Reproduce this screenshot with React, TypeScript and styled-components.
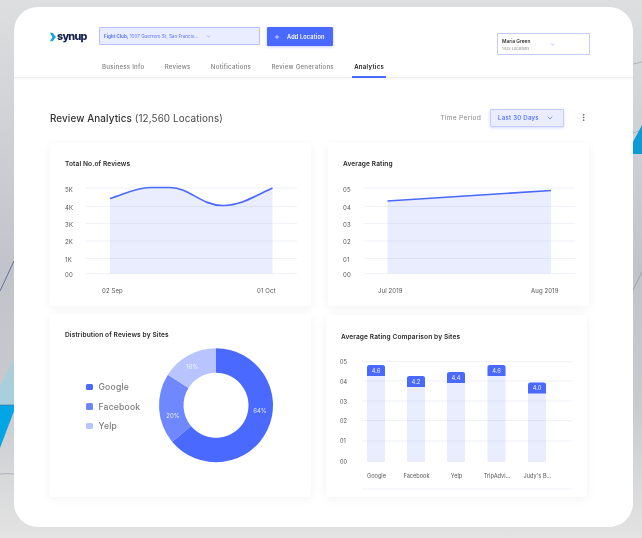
import React from "react";
import styled, { createGlobalStyle } from "styled-components";
import { ChevronDown, Plus, MoreVertical } from "lucide-react";

const Global = createGlobalStyle`
  html, body { margin: 0; padding: 0; background: #d8d9dc; }
  * { box-sizing: border-box; }
  body { font-family: Inter, "Liberation Sans", sans-serif; }
`;

const Page = styled.div`
  position: relative;
  width: 642px;
  height: 538px;
  overflow: hidden;
  padding: 7px 9px 11px 14px;
  background: linear-gradient(180deg, #dddedf 0%, #d2d3d7 20%, #c1c3ca 50%, #c8cace 75%, #e3e3e3 100%);
  filter: blur(0.35px);
`;
const Backdrop = styled.svg`
  position: absolute;
  inset: 0;
`;
const Window = styled.div`
  position: relative;
  height: 520px;
  background: #fff;
  border-radius: 24px;
  overflow: hidden;
`;
const Header = styled.header`
  height: 71px;
  border-bottom: 1px solid #eeeef0;
  box-shadow: 0 1px 2px rgba(0, 0, 0, 0.04);
`;
const TopBar = styled.div`
  display: flex;
  align-items: flex-start;
  padding: 20px 43px 0 36px;
  height: 49px;
`;
const Logo = styled.div`
  width: 49px;
  height: 19px;
  display: flex;
  align-items: center;
  color: #16224f;
  font-size: 10.8px;
  font-weight: 800;
  letter-spacing: -0.75px;
  svg { margin-right: 1px; }
`;
const LocationSelect = styled.div`
  width: 161px;
  height: 18px;
  display: flex;
  align-items: center;
  gap: 8px;
  padding-left: 4px;
  background: #e9edff;
  border: 1px solid #b6c2ff;
  border-radius: 1px;
  color: #5b77ff;
  font-size: 4.6px;
  svg { color: #4a69ff; }
`;
const AddButton = styled.button`
  width: 66px;
  height: 19px;
  margin-left: 7px;
  display: flex;
  align-items: center;
  gap: 7px;
  padding: 0 0 0 7px;
  background: #4a69ff;
  border: 0;
  border-radius: 1px;
  color: #fff;
  font: 600 5.6px Inter, sans-serif;
  letter-spacing: 0.15px;
  box-shadow: 0 1px 3px rgba(74, 105, 255, 0.35);
`;
const UserBox = styled.div`
  margin: 6px 0 0 auto;
  width: 93px;
  height: 22px;
  display: flex;
  align-items: center;
  gap: 19px;
  padding-left: 4px;
  background: #fff;
  border: 1px solid #c3cdff;
  border-radius: 1px;
  svg { color: #4a69ff; }
`;
const UserText = styled.div`
  display: flex;
  flex-direction: column;
  gap: 2px;
  width: 29px;
`;
const UserName = styled.span`
  font-size: 4.8px;
  font-weight: 600;
  color: #333;
  white-space: nowrap;
`;
const UserSub = styled.span`
  font-size: 3.8px;
  color: #888;
  white-space: nowrap;
`;
const Tabs = styled.nav`
  display: flex;
  height: 22px;
  padding-left: 86px;
  gap: 16.3px;
`;
const Tab = styled.div<{ $active?: boolean }>`
  height: 22px;
  padding: 6px 2px 0;
  font-size: 6.1px;
  line-height: 10px;
  font-weight: ${(p) => (p.$active ? 600 : 500)};
  letter-spacing: 0.25px;
  color: ${(p) => (p.$active ? "#222" : "#808080")};
  border-bottom: 2px solid ${(p) => (p.$active ? "#4a69ff" : "transparent")};
  white-space: nowrap;
`;
const Main = styled.main`
  padding: 0 44px 0 36px;
`;
const TitleRow = styled.div`
  display: flex;
  align-items: center;
  height: 17px;
  margin: 32px 0 16px;
`;
const Title = styled.h1`
  margin: 0;
  font-size: 9.9px;
  line-height: 17px;
  font-weight: 400;
  color: #4a4a4a;
  letter-spacing: 0.1px;
  b { font-weight: 500; color: #333; }
`;
const PeriodLabel = styled.span`
  margin: 0 0 1px auto;
  font-size: 6.7px;
  color: #888;
  letter-spacing: 0.25px;
`;
const PeriodSelect = styled.div`
  width: 74px;
  height: 18px;
  margin: 0 0 2px 9px;
  display: flex;
  align-items: center;
  justify-content: space-between;
  padding: 0 9px 0 7px;
  background: #e9edff;
  border: 1px solid #c3cdff;
  border-radius: 1px;
  box-shadow: 0 1px 3px rgba(74, 105, 255, 0.25);
  color: #4a69ff;
  font-size: 6.1px;
  font-weight: 500;
  letter-spacing: 0.25px;
`;
const Kebab = styled.div`
  width: 10px;
  margin: 0 0 2px 15px;
  display: flex;
  color: #555;
`;
const Row = styled.div<{ $gap: number; $mb?: number }>`
  display: flex;
  gap: ${(p) => p.$gap}px;
  margin-bottom: ${(p) => p.$mb ?? 0}px;
`;
const Card = styled.section<{ $h: number; $mt?: number }>`
  width: 261px;
  height: ${(p) => p.$h}px;
  margin-top: ${(p) => p.$mt ?? 0}px;
  background: #fff;
  box-shadow: 0 2px 10px rgba(40, 40, 70, 0.055);
  border-radius: 2px;
`;
const CardTitle = styled.h2<{ $top?: number }>`
  margin: 0;
  padding: ${(p) => p.$top ?? 17}px 0 0 15px;
  height: 32px;
  font-size: 6.6px;
  line-height: 8px;
  font-weight: 600;
  color: #2a2a2a;
  letter-spacing: 0.1px;
`;
const Chart = styled.svg`
  display: block;
  text {
    font-family: Inter, "Liberation Sans", sans-serif;
  }
`;

const GRID = [13, 31.5, 48.5, 66, 83.5, 98.5];
const YPOS = [14.5, 32.5, 50, 67, 84.5, 99.5];
function LineChart({ labels, xLabels, line, fill }: { labels: string[]; xLabels: [string, number][]; line: string; fill: string }) {
  return (
    <Chart width={261} height={131} viewBox="0 0 261 131">
      <path d={fill} fill="#e9edfd" />
      {GRID.map((y) => (
        <line key={y} x1={36} x2={247} y1={y} y2={y} stroke="#7a86b8" strokeOpacity={0.14} strokeWidth={0.8} />
      ))}
      <path d={line} fill="none" stroke="#4a69ff" strokeWidth={1.7} />
      {labels.map((l, i) => (
        <text key={l} x={15} y={YPOS[i] + 2} fontSize={6} fill="#555" letterSpacing={0.2}>{l}</text>
      ))}
      {xLabels.map(([l, x]) => (
        <text key={l} x={x} y={117.5} fontSize={6} fill="#555" letterSpacing={0.1}>{l}</text>
      ))}
    </Chart>
  );
}

function Donut() {
  const cx = 166, cy = 59.3, R = 57, r = 32.5;
  const pt = (f: number, rad: number) => [cx + rad * Math.sin(f * 2 * Math.PI), cy - rad * Math.cos(f * 2 * Math.PI)];
  const seg = (a: number, b: number) => {
    const [x1, y1] = pt(a, R), [x2, y2] = pt(b, R), [x3, y3] = pt(b, r), [x4, y4] = pt(a, r);
    const large = b - a > 0.5 ? 1 : 0;
    return `M${x1} ${y1}A${R} ${R} 0 ${large} 1 ${x2} ${y2}L${x3} ${y3}A${r} ${r} 0 ${large} 0 ${x4} ${y4}Z`;
  };
  return (
    <Chart width={230} height={122} viewBox="0 0 230 122">
      <path d={seg(0, 0.64)} fill="#4a69ff" />
      <path d={seg(0.64, 0.84)} fill="#6f88ff" />
      <path d={seg(0.84, 1)} fill="#b8c4ff" />
      <text x={210} y={67} textAnchor="middle" fontSize={6} fill="#fff" opacity={0.85}>64%</text>
      <text x={123} y={72} textAnchor="middle" fontSize={6} fill="#fff" opacity={0.85}>20%</text>
      <text x={142} y={23} textAnchor="middle" fontSize={6} fill="#fff" opacity={0.85}>16%</text>
    </Chart>
  );
}

const DonutBody = styled.div`
  position: relative;
  display: flex;
`;
const Legend = styled.ul`
  position: absolute;
  left: 36px;
  top: 36px;
  margin: 0;
  padding: 0;
  list-style: none;
  display: flex;
  flex-direction: column;
  gap: 9.5px;
`;
const LegendItem = styled.li`
  display: flex;
  align-items: center;
  gap: 6px;
  height: 10px;
  font-size: 8.6px;
  font-weight: 500;
  color: #7c7c7c;
  letter-spacing: 0.2px;
`;
const Swatch = styled.i<{ $c: string }>`
  width: 6.5px;
  height: 6.5px;
  border-radius: 1.5px;
  background: ${(p) => p.$c};
`;

const BARS: [string, string, number, number][] = [
  ["Google", "4.6", 41, 365],
  ["Facebook", "4.2", 81, 376],
  ["Yelp", "4.4", 121, 372],
  ["TripAdvi…", "4.6", 161.5, 365],
  ["Judy's B…", "4.0", 202, 382.5],
];
function BarChart() {
  // origin of this svg is x=326, y=347 on the page
  const Y = (py: number) => py - 347;
  return (
    <Chart width={260} height={150} viewBox="0 0 260 150">
      {BARS.map(([name, , x, top]) => (
        <rect key={name} x={x} y={Y(top)} width={18} height={462 - top} fill="#e9edfd" />
      ))}
      {[361.7, 381, 401, 420.5, 441, 489].map((y) => (
        <line key={y} x1={36} x2={246} y1={Y(y)} y2={Y(y)} stroke="#7a86b8" strokeOpacity={0.14} strokeWidth={0.8} />
      ))}
      {["05", "04", "03", "02", "01", "00"].map((l, i) => (
        <text key={l} x={14} y={Y([363.5, 383.5, 403.5, 423, 443, 464][i])} fontSize={5.6} fill="#555">{l}</text>
      ))}
      {BARS.map(([name, v, x, top]) => (
        <g key={name}>
          <path d={`M${x} ${Y(top) + 11}V${Y(top) + 2.5}a2.5 2.5 0 0 1 2.5 -2.5h13a2.5 2.5 0 0 1 2.5 2.5V${Y(top) + 11}Z`} fill="#4a69ff" />
          <text x={x + 9} y={Y(top) + 7.8} textAnchor="middle" fontSize={5.8} fill="#fff" opacity={0.9}>{v}</text>
          <text x={x + 9.5} y={Y(478)} textAnchor="middle" fontSize={5.6} fill="#555">{name}</text>
        </g>
      ))}
    </Chart>
  );
}

export default function App() {
  return (
    <>
      <Global />
      <Page>
        <Backdrop width={642} height={538} viewBox="0 0 642 538">
          <path d="M14 261L0 291" stroke="#3f4a7c" strokeWidth={0.7} fill="none" />
          <path d="M14 360L0 386V405H14Z" fill="#a9cfdc" />
          <path d="M0 405H14V411L0 448Z" fill="#04a5e6" />
          <path d="M0 405H14" stroke="#3f6d9c" strokeWidth={0.6} />
          <path d="M0 474Q7 473 14 474" stroke="#9a9ca8" strokeWidth={0.6} fill="none" />
          <path d="M633 64L642 62" stroke="#9a9ca8" strokeWidth={0.6} />
          <path d="M633 133L642 130" stroke="#9a9ca8" strokeWidth={0.6} />
          <path d="M633 142L642 125V154H633Z" fill="#0e9bd3" />
          <path d="M633 290L642 272" stroke="#8a8c98" strokeWidth={0.6} />
        </Backdrop>
        <Window>
          <Header>
            <TopBar>
              <Logo>
                <svg width="6" height="10" viewBox="0 0 7 10">
                  <path d="M0 0H3L7 5L3 10H0L2.8 5Z" fill="#0ea5e9" />
                </svg>
                synup
              </Logo>
              <LocationSelect>
                <span><b>Fight Club,</b> 1007 Guerrero St, San Francis...</span>
                <ChevronDown size={5} />
              </LocationSelect>
              <AddButton>
                <Plus size={6} strokeWidth={2.5} />
                Add Location
              </AddButton>
              <UserBox>
                <UserText>
                  <UserName>Maria Green</UserName>
                  <UserSub>1433 Locations</UserSub>
                </UserText>
                <ChevronDown size={5} />
              </UserBox>
            </TopBar>
            <Tabs>
              <Tab>Business Info</Tab>
              <Tab>Reviews</Tab>
              <Tab>Notifications</Tab>
              <Tab>Review Generations</Tab>
              <Tab $active>Analytics</Tab>
            </Tabs>
          </Header>
          <Main>
            <TitleRow>
              <Title><b>Review Analytics</b> (12,560 Locations)</Title>
              <PeriodLabel>Time Period</PeriodLabel>
              <PeriodSelect>
                Last 30 Days
                <ChevronDown size={8} strokeWidth={2} />
              </PeriodSelect>
              <Kebab><MoreVertical size={9} /></Kebab>
            </TitleRow>
            <Row $gap={17} $mb={8}>
              <Card $h={163}>
                <CardTitle>Total No.of Reviews</CardTitle>
                <LineChart
                  labels={["5K", "4K", "3K", "2K", "1K", "00"]}
                  xLabels={[["02 Sep", 52], ["01 Oct", 207]]}
                  fill="M60 23.5C75 19 85 13 100 12.5H120C140 12.5 150 30 172 30.5C190 31 205 21 222.5 13V98.5H60Z"
                  line="M60 23.5C75 19 85 13 100 12.5H120C140 12.5 150 30 172 30.5C190 31 205 21 222.5 13"
                />
              </Card>
              <Card $h={163}>
                <CardTitle>Average Rating</CardTitle>
                <LineChart
                  labels={["05", "04", "03", "02", "01", "00"]}
                  xLabels={[["Jul 2019", 50], ["Aug 2019", 203]]}
                  fill="M59.5 26L223 15.5V98.5H59.5Z"
                  line="M59.5 26L223 15.5"
                />
              </Card>
            </Row>
            <Row $gap={15}>
              <Card $h={183}>
                <CardTitle>Distribution of Reviews by Sites</CardTitle>
                <DonutBody>
                  <Legend>
                    <LegendItem><Swatch $c="#4a69ff" />Google</LegendItem>
                    <LegendItem><Swatch $c="#6f88ff" />Facebook</LegendItem>
                    <LegendItem><Swatch $c="#b8c4ff" />Yelp</LegendItem>
                  </Legend>
                  <Donut />
                </DonutBody>
              </Card>
              <Card $h={182} $mt={1}>
                <CardTitle $top={18}>Average Rating Comparison by Sites</CardTitle>
                <BarChart />
              </Card>
            </Row>
          </Main>
        </Window>
      </Page>
    </>
  );
}
